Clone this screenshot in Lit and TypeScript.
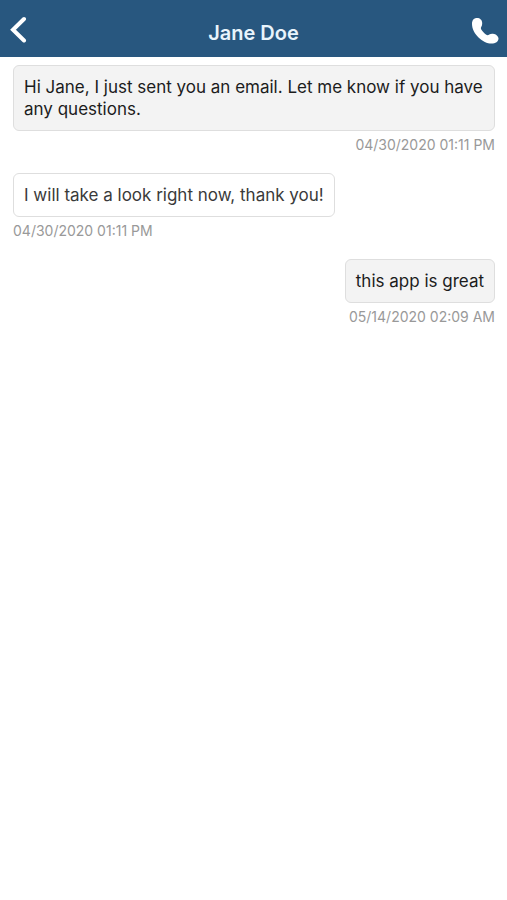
import { LitElement, html, css } from "lit";
import { customElement } from "lit/decorators.js";

interface Message {
  text: string;
  time: string;
  sent: boolean;
}

const messages: Message[] = [
  { text: "Hi Jane, I just sent you an email. Let me know if you have any questions.", time: "04/30/2020 01:11 PM", sent: true },
  { text: "I will take a look right now, thank you!", time: "04/30/2020 01:11 PM", sent: false },
  { text: "this app is great", time: "05/14/2020 02:09 AM", sent: true },
];

@customElement("app-root")
export class AppRoot extends LitElement {
  static styles = css`
    :host {
      display: block;
      min-height: 100vh;
      background: #fff;
      font-family: Inter, "Liberation Sans", sans-serif;
    }
    .bar {
      display: grid;
      grid-template-columns: 48px 1fr 48px;
      height: 57px;
      box-sizing: border-box;
      background: #28577f;
      color: #fff;
    }
    .title {
      margin: 0;
      padding-top: 8px;
      align-self: center;
      text-align: center;
      font-size: 20px;
      line-height: 24px;
      font-weight: 600;
      color: #e9f4fc;
    }
    .icon {
      display: flex;
      align-items: center;
      padding: 0 8px;
      border: 0;
      background: none;
      color: inherit;
    }
    .call {
      justify-content: flex-end;
    }
    .thread {
      display: flex;
      flex-direction: column;
      gap: 17px;
      margin: 0;
      padding: 8px 12px 8px 13px;
      list-style: none;
    }
    .message {
      display: flex;
      flex-direction: column;
      align-items: flex-start;
      gap: 3px;
    }
    .sent {
      align-items: flex-end;
    }
    .bubble {
      margin: 0;
      padding: 10px;
      border: 1px solid #dedede;
      border-radius: 6px;
      background: #fff;
      color: #3a3a3a;
      font-size: 17px;
      line-height: 22px;
    }
    .sent .bubble {
      background: #f3f3f3;
      color: #1c1c1c;
    }
    .time {
      color: #999;
      font-size: 14px;
      line-height: 22px;
    }
  `;

  render() {
    return html`
      <header class="bar">
        <button class="icon" aria-label="Back">
          <svg width="20" height="28" viewBox="0 0 20 28" fill="none" stroke="currentColor" stroke-width="4" stroke-linecap="round">
            <path d="M16 4 5 14.800 16 25.500" />
          </svg>
        </button>
        <h1 class="title">Jane Doe</h1>
        <button class="icon call" aria-label="Call">
          <svg width="28" height="32" viewBox="0 -4 28 32" fill="currentColor">
            <path d="M1 7C1 3 3 1 6 1c3 0 5.200 2 5.200 5 0 2-.4 3-1 4-.6 1-.3 2 .4 3.100 1.200 1.900 2.800 3.500 4.700 4.700 1 .6 2 .5 3-.2 1-.7 2.200-1 3.700-.8 3 .3 5.500 2.600 5.500 4.800 0 3-3 5-7 5C12 26.600 1 17 1 7Z" />
          </svg>
        </button>
      </header>
      <main>
        <ul class="thread">
          ${messages.map(
            (m) => html`<li class="message ${m.sent ? "sent" : ""}">
              <p class="bubble">${m.text}</p>
              <time class="time">${m.time}</time>
            </li>`
          )}
        </ul>
      </main>
    `;
  }
}
